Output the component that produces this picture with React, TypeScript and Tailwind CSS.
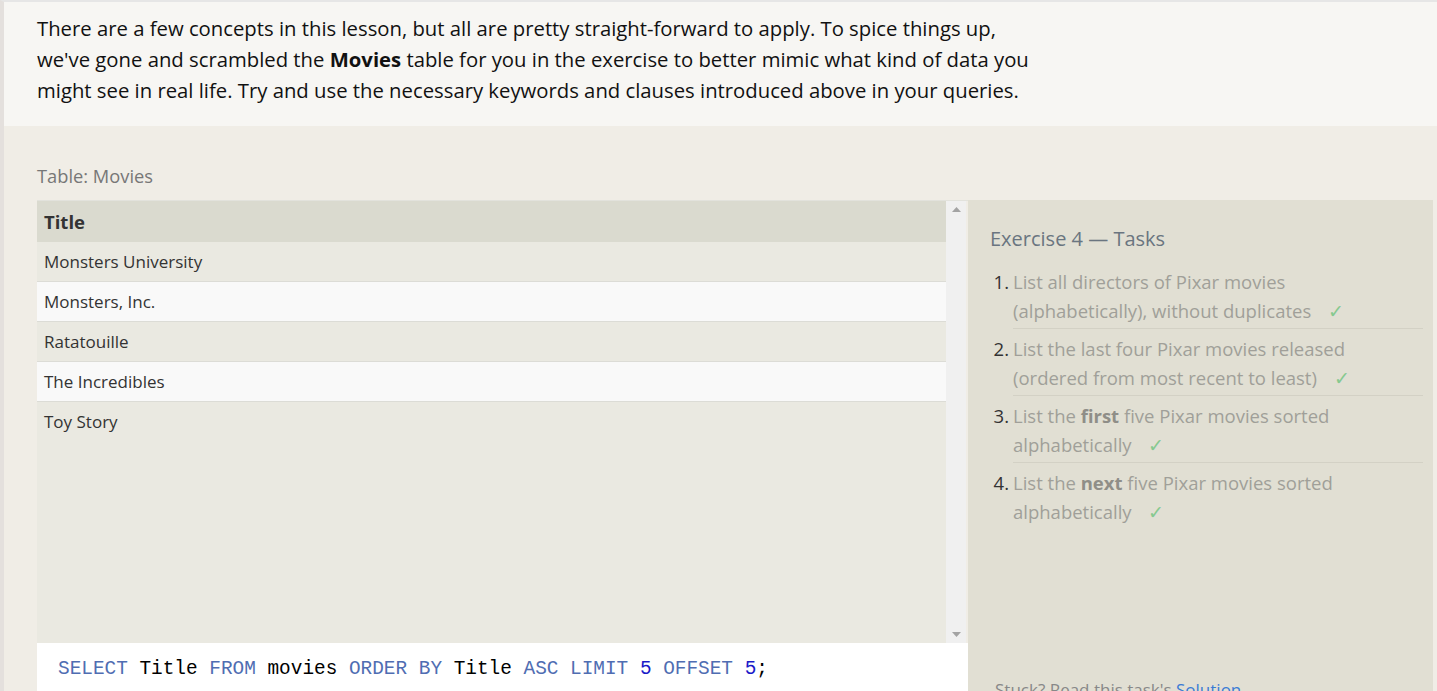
const movies = ["Monsters University", "Monsters, Inc.", "Ratatouille", "The Incredibles", "Toy Story"];

const sans = "font-['Open_Sans','Noto_Sans',sans-serif]";

function Check() {
  return <span className="ml-3 text-[#86c98f]">✓</span>;
}

function Task({ n, children, last }: { n: number; children: React.ReactNode; last?: boolean }) {
  return (
    <li className="flex">
      <span className="w-[23px] shrink-0 text-right pr-[4px] text-[#333]">{n}.</span>
      <div className={`flex-1 pb-[3px] mb-[5px] ${last ? "" : "border-b border-[#d3d1c5]"}`}>{children}</div>
    </li>
  );
}

export default function App() {
  return (
    <div className={`min-h-[691px] bg-[#f0ede6] border-l-4 border-l-[#e4e0dd] border-t-2 border-t-[#e6e6e6] overflow-hidden ${sans}`}>
      <div className="bg-[#f7f6f3] h-[124px] px-[33px] pt-[11px] text-[20.3px] leading-[31px] text-[#111]">
        There are a few concepts in this lesson, but all are pretty straight-forward to apply. To spice things up,
        <br />
        we've gone and scrambled the <b>Movies</b> table for you in the exercise to better mimic what kind of data you
        <br />
        might see in real life. Try and use the necessary keywords and clauses introduced above in your queries.
      </div>

      <div className="pl-[33px] pr-[4px] pt-[38px]">
        <div className="text-[18.3px] leading-[24px] text-[#777] mb-[12px]">Table: Movies</div>
        <div className="flex">
          <div className="w-[931px] shrink-0 flex flex-col">
            <div className="h-[443px] flex border-t border-[#e2e2dc]">
              <div className="w-[909px] bg-[#eae9e1] text-[17px] text-[#333]">
                <div className="h-[41px] bg-[#dadacf] flex items-center px-[7px] font-bold text-[18.5px] text-[#333]">Title</div>
                {movies.map((m, i) => (
                  <div
                    key={m}
                    className={`h-[40px] flex items-center px-[7px] ${i % 2 === 1 ? "bg-[#f9f9f9]" : "bg-[#eae9e1]"} ${i < movies.length - 1 ? "border-b border-[#dcdcd6]" : ""}`}
                  >
                    {m}
                  </div>
                ))}
              </div>
              <div className="w-[20px] bg-[#f0f0f0] flex flex-col items-center justify-between py-[6px]">
                <svg width="9" height="5" viewBox="0 0 9 5"><path d="M4.5 0L9 5H0z" fill="#a3a3a3" /></svg>
                <svg width="9" height="5" viewBox="0 0 9 5"><path d="M0 0h9L4.5 5z" fill="#a3a3a3" /></svg>
              </div>
            </div>
            <div className="bg-white h-[60px] pl-[21px] pt-[13px] font-['Liberation_Mono',monospace] text-[19.4px] leading-[26px] text-black whitespace-pre">
              <span className="text-[#4f6db2]">SELECT</span> Title <span className="text-[#4f6db2]">FROM</span> movies{" "}
              <span className="text-[#4f6db2]">ORDER BY</span> Title <span className="text-[#4f6db2]">ASC</span>{" "}
              <span className="text-[#4f6db2]">LIMIT</span> <span className="text-[#1a1ac8]">5</span>{" "}
              <span className="text-[#4f6db2]">OFFSET</span> <span className="text-[#1a1ac8]">5</span>;
            </div>
          </div>
          <div className="w-[465px] shrink-0 bg-[#e1dfd3] pl-[22px] pr-[10px] pt-[24px] h-[492px] flex flex-col">
            <div className="text-[20px] leading-[30px] text-[#6a7580] mb-[13px]">Exercise 4 — Tasks</div>
            <ol className="text-[18.5px] leading-[29px] text-[#a09f99]">
              <Task n={1}>
                List all directors of Pixar movies
                <br />
                (alphabetically), without duplicates <Check />
              </Task>
              <Task n={2}>
                List the last four Pixar movies released
                <br />
                (ordered from most recent to least) <Check />
              </Task>
              <Task n={3}>
                List the <b className="text-[#8f8e88]">first</b> five Pixar movies sorted
                <br />
                alphabetically <Check />
              </Task>
              <Task n={4} last>
                List the <b className="text-[#8f8e88]">next</b> five Pixar movies sorted
                <br />
                alphabetically <Check />
              </Task>
            </ol>
            <div className="mt-auto text-[17px] leading-[22px] text-[#888] pl-[5px] translate-y-[9px]">
              Stuck? Read this task's <span className="text-[#3a7bd5]">Solution</span>
            </div>
          </div>
        </div>
      </div>
    </div>
  );
}
